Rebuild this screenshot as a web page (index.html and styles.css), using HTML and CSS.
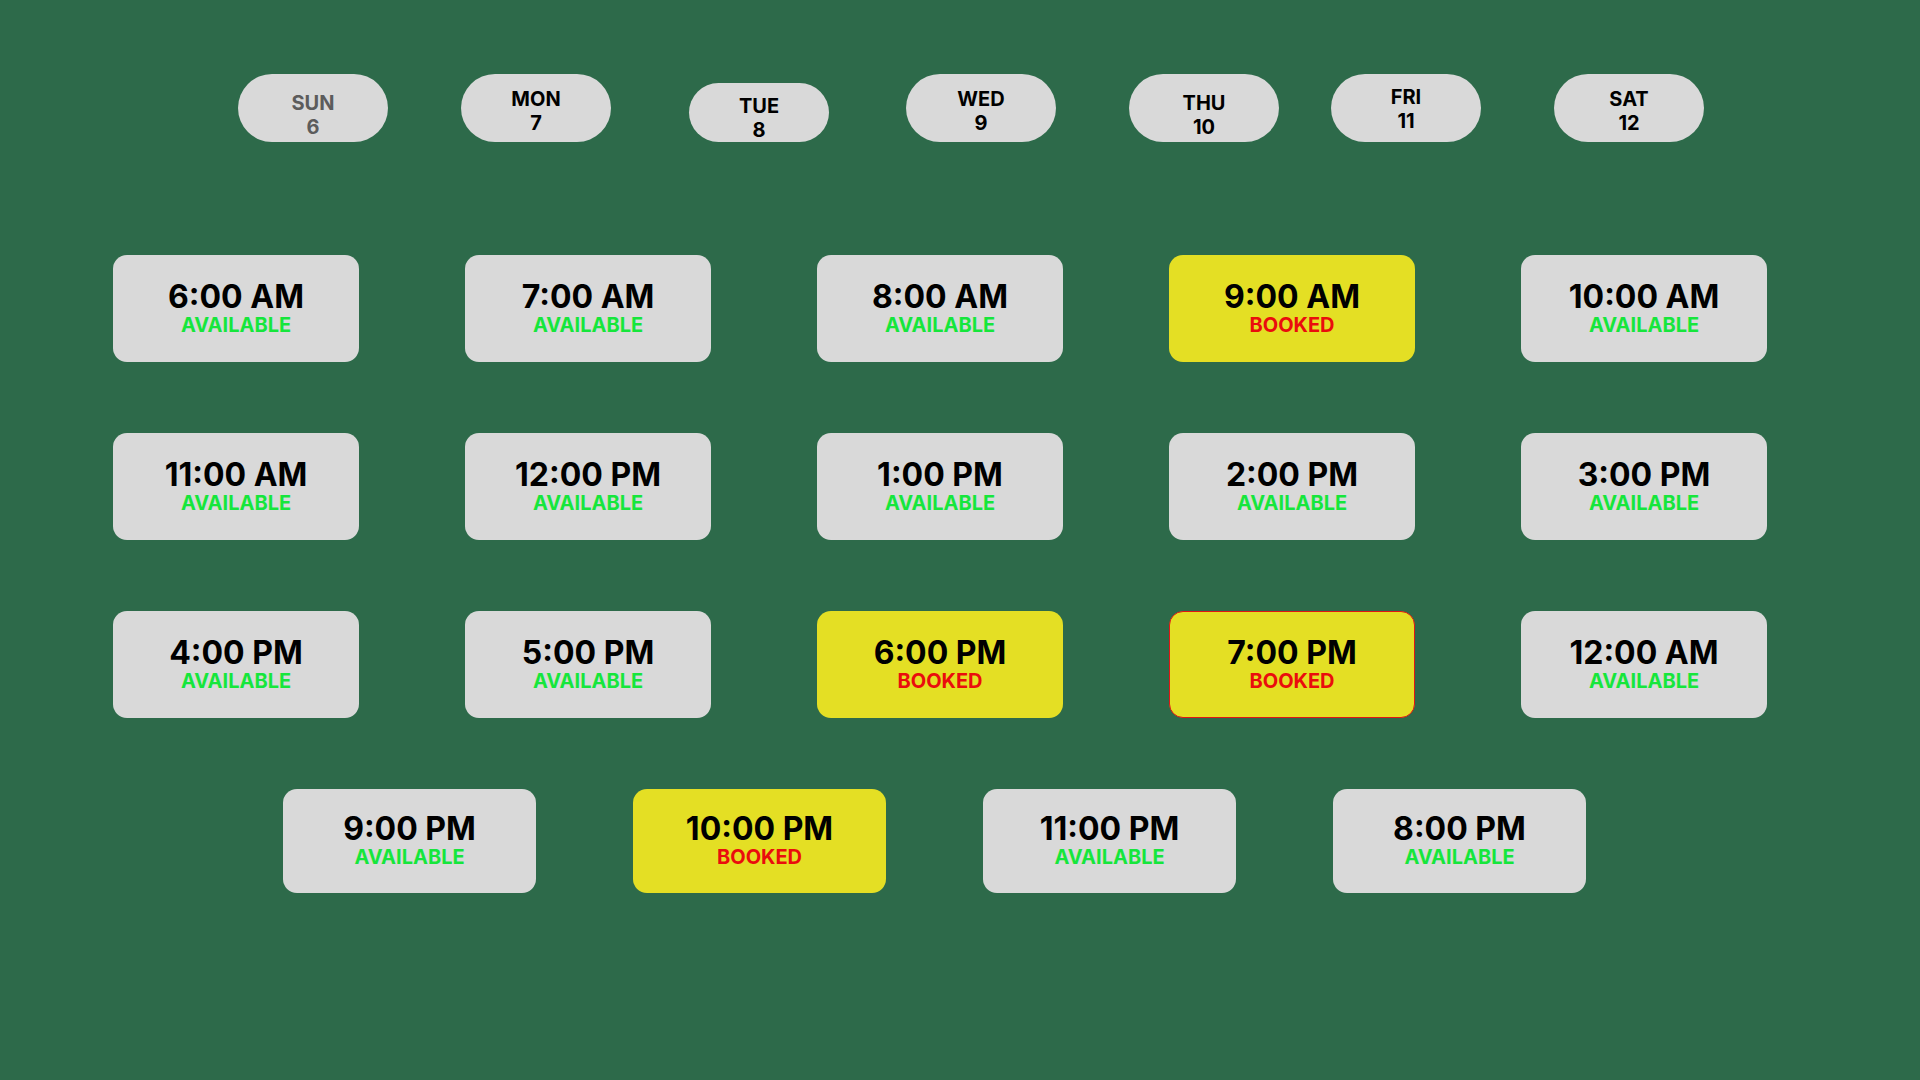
FILE: index.html
```html
<!DOCTYPE html>
<html lang="en">
<head>
    <meta charset="UTF-8">
    <meta name="viewport" content="width=device-width, initial-scale=1.0">
    <title>Book a slot</title>
    <link rel="stylesheet" href="styles.css">
</head>
<body>
    <!-- Days of the week -->
    <div class="week">
        <div class="day muted"><span>SUN</span><span>6</span></div>
        <div class="day"><span>MON</span><span>7</span></div>
        <div class="day small"><span>TUE</span><span>8</span></div>
        <div class="day"><span>WED</span><span>9</span></div>
        <div class="day"><span>THU</span><span>10</span></div>
        <div class="day"><span>FRI</span><span>11</span></div>
        <div class="day"><span>SAT</span><span>12</span></div>
    </div>

    <!-- Time slots -->
    <div class="slots">
        <div class="slot"><span class="time">6:00 AM</span><span class="status">AVAILABLE</span></div>
        <div class="slot"><span class="time">7:00 AM</span><span class="status">AVAILABLE</span></div>
        <div class="slot"><span class="time">8:00 AM</span><span class="status">AVAILABLE</span></div>
        <div class="slot booked"><span class="time">9:00 AM</span><span class="status">BOOKED</span></div>
        <div class="slot"><span class="time">10:00 AM</span><span class="status">AVAILABLE</span></div>

        <div class="slot"><span class="time">11:00 AM</span><span class="status">AVAILABLE</span></div>
        <div class="slot"><span class="time">12:00 PM</span><span class="status">AVAILABLE</span></div>
        <div class="slot"><span class="time">1:00 PM</span><span class="status">AVAILABLE</span></div>
        <div class="slot"><span class="time">2:00 PM</span><span class="status">AVAILABLE</span></div>
        <div class="slot"><span class="time">3:00 PM</span><span class="status">AVAILABLE</span></div>

        <div class="slot"><span class="time">4:00 PM</span><span class="status">AVAILABLE</span></div>
        <div class="slot"><span class="time">5:00 PM</span><span class="status">AVAILABLE</span></div>
        <div class="slot booked"><span class="time">6:00 PM</span><span class="status">BOOKED</span></div>
        <div class="slot booked outlined"><span class="time">7:00 PM</span><span class="status">BOOKED</span></div>
        <div class="slot"><span class="time">12:00 AM</span><span class="status">AVAILABLE</span></div>
    </div>

    <div class="slots-last">
        <div class="slot"><span class="time">9:00 PM</span><span class="status">AVAILABLE</span></div>
        <div class="slot booked"><span class="time">10:00 PM</span><span class="status">BOOKED</span></div>
        <div class="slot"><span class="time">11:00 PM</span><span class="status">AVAILABLE</span></div>
        <div class="slot"><span class="time">8:00 PM</span><span class="status">AVAILABLE</span></div>
    </div>
</body>
</html>
```

FILE: styles.css
```css
/* Reset */
* {
    margin: 0;
    padding: 0;
    box-sizing: border-box;
    font-family: Inter, "Noto Sans", Arial, sans-serif;
}

body {
    width: 1920px;
    height: 1080px;
    background: #2d6a4a;
    overflow: hidden;
}

/* Day pills */
.week {
    display: flex;
    align-items: flex-end;
    gap: 73px;
    padding: 74px 0 0 238px;
}

.day {
    width: 150px;
    height: 68px;
    border-radius: 34px;
    background-color: #d9d9d9;
    display: flex;
    flex-direction: column;
    align-items: center;
    justify-content: center;
    padding-top: 6px;
    color: #000;
    font-size: 20px;
    font-weight: 700;
    line-height: 24px;
}

.day.muted {
    color: #5c5c5c;
    padding-top: 14px;
}

.day.small {
    width: 140px;
    height: 59px;
    margin-left: 5px;
    padding-top: 10px;
}

.day:nth-child(4) {
    margin-left: 4px;
}

.day:nth-child(5) {
    padding-top: 14px;
}

.day:nth-child(6) {
    margin-left: -21px;
    padding-top: 2px;
}

/* Slot cards */
.slots {
    display: grid;
    grid-template-columns: repeat(5, 246px);
    grid-auto-rows: 107px;
    column-gap: 106px;
    row-gap: 71px;
    padding-left: 113px;
    margin-top: 113px;
}

.slots-last {
    display: flex;
    gap: 97px;
    padding-left: 283px;
    margin-top: 71px;
}

.slots-last .slot {
    width: 253px;
    height: 104px;
}

.slot {
    background-color: #d9d9d9;
    border-radius: 14px;
    display: flex;
    flex-direction: column;
    align-items: center;
    justify-content: center;
}

.slot .time {
    font-size: 32px;
    font-weight: 700;
    line-height: 32px;
    color: #000;
}

.slot .status {
    font-size: 20px;
    font-weight: 700;
    line-height: 24px;
    color: #16e63c;
}

.slot.booked {
    background-color: #e4df24;
}

.slot.booked .status {
    color: #ea0d0d;
}

.slot.outlined {
    border: 1px solid #e01515;
}
```
